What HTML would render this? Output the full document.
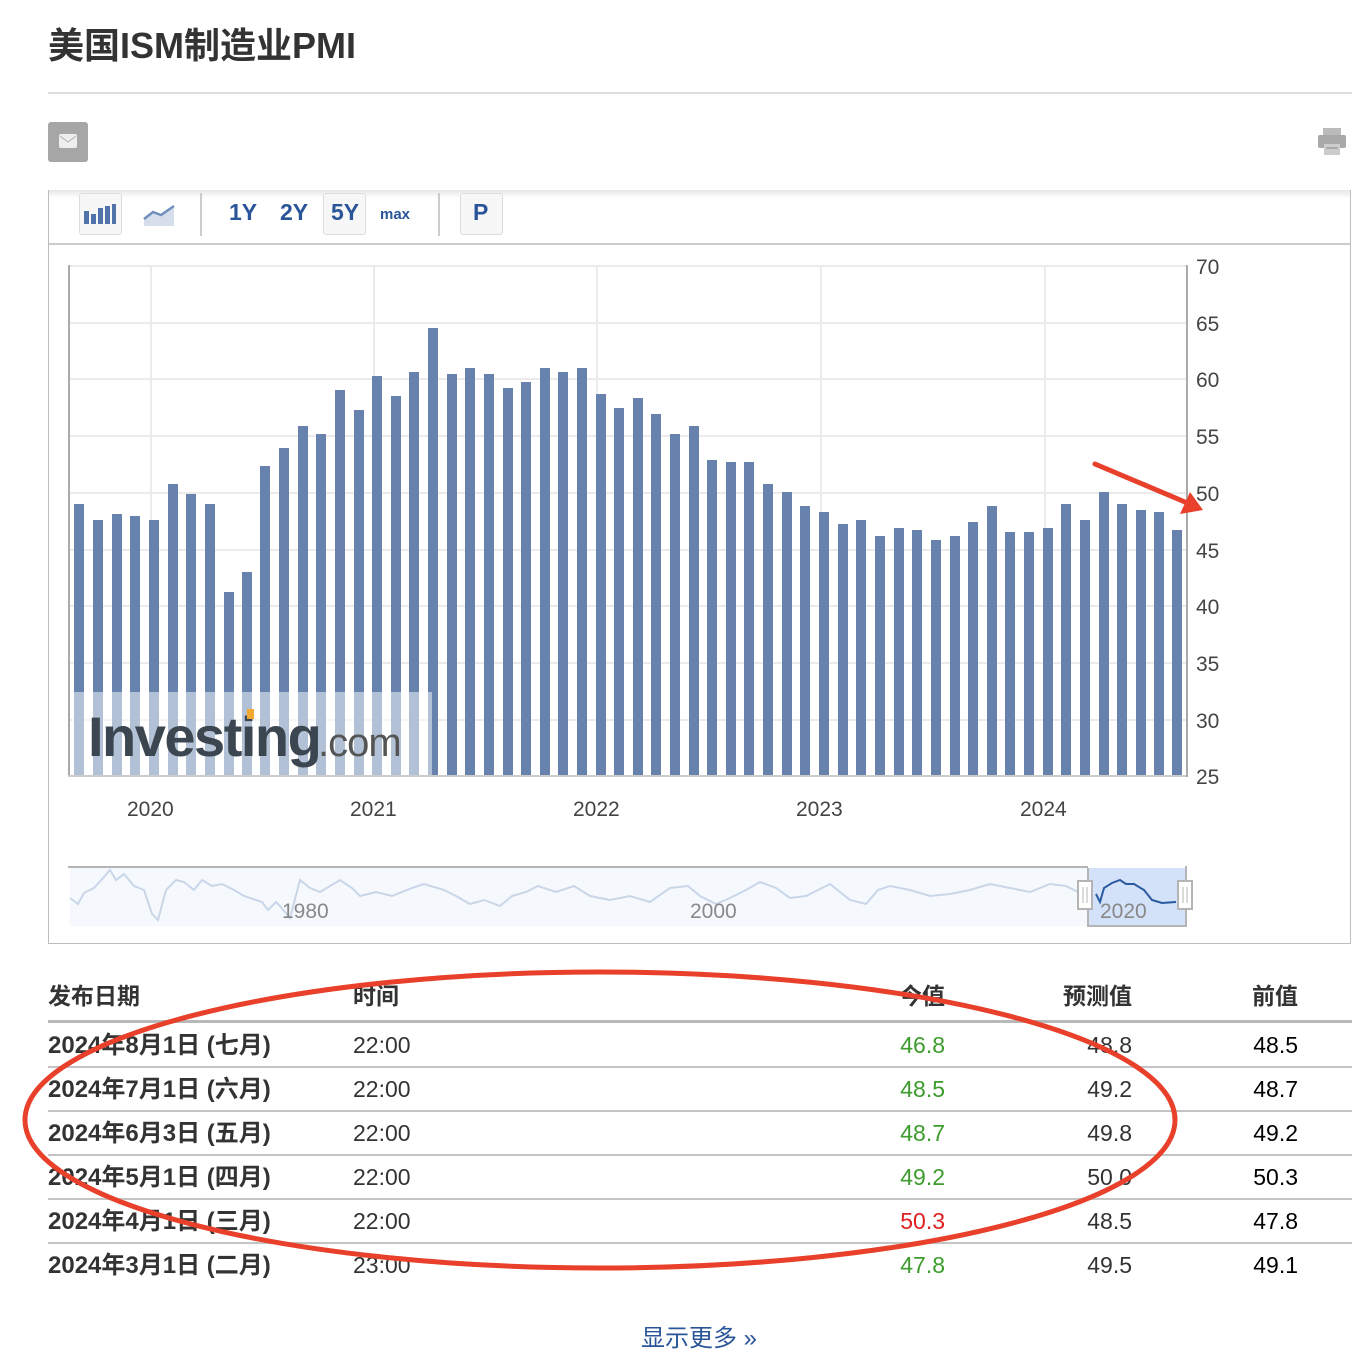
<!DOCTYPE html>
<html><head><meta charset="utf-8">
<style>
body{margin:0;width:1356px;height:1332px;overflow:hidden;background:#fff;font-family:"Liberation Sans","Noto Sans CJK SC",sans-serif;color:#333;position:relative}
.a{position:absolute;white-space:nowrap}
.h{font-size:23px;font-weight:bold;top:980px;line-height:32px}
.r{font-size:23px;line-height:30px}
.b{font-weight:bold;font-size:24px}
.g{color:#3c9c2c}.red{color:#e02020}
.rt{text-align:right;width:120px}
.tb{position:absolute;top:193px;height:42px;border:1px solid #ddd;border-radius:3px;background:#f7f7f7;box-sizing:border-box}
.tx{position:absolute;top:199px;font-size:23px;font-weight:bold;color:#2a5599}
</style></head><body>
<div class="a" style="left:48px;top:17px;font-size:36px;font-weight:bold;color:#333">美国ISM制造业PMI</div>
<div class="a" style="left:48px;top:92px;width:1304px;height:2px;background:#ddd"></div>
<div class="a" style="left:48px;top:122px;width:40px;height:40px;background:#a6a6a6;border-radius:3px"></div>
<div class="a" style="left:59px;top:134px;width:18px;height:14px;background:#eee;border-radius:2px"></div>
<svg class="a" style="left:59px;top:134px" width="18" height="14"><path d="M1 2 L9 8 L17 2" stroke="#bbb" fill="none" stroke-width="1.2"/></svg>
<svg class="a" style="left:1316px;top:126px" width="32" height="32"><rect x="7" y="2" width="18" height="8" fill="#bbb"/><rect x="2" y="9" width="28" height="13" rx="2" fill="#a9a9a9"/><rect x="8" y="18" width="16" height="11" fill="#ccc"/><rect x="10" y="21" width="12" height="2" fill="#aaa"/></svg>

<div class="a" style="left:48px;top:190px;width:1303px;height:754px;border:1px solid #bdbdbd;border-top:1px solid #ccc;box-sizing:border-box"></div>
<div class="a" style="left:49px;top:243px;width:1301px;height:2px;background:#ccc"></div>
<div class="a" style="left:49px;top:190px;width:1301px;height:8px;background:linear-gradient(#e6e6e6,#fff)"></div>
<div class="tb" style="left:79px;width:43px"></div>
<svg class="a" style="left:84px;top:203px" width="34" height="22"><rect x="0" y="8" width="5" height="13" fill="#4f73aa"/><rect x="7" y="11" width="5" height="10" fill="#4f73aa"/><rect x="14" y="5" width="5" height="16" fill="#4f73aa"/><rect x="21" y="3" width="5" height="18" fill="#4f73aa"/><rect x="28" y="1" width="4" height="20" fill="#4f73aa"/></svg>
<svg class="a" style="left:143px;top:201px" width="34" height="26"><path d="M1 18 L10 11 L18 14 L31 5 L31 25 L1 25Z" fill="#d5deea"/><path d="M1 18 L10 11 L18 14 L31 5" stroke="#6f8fbd" stroke-width="2.5" fill="none"/></svg>
<div class="a" style="left:200px;top:193px;width:2px;height:43px;background:#ccc"></div>
<div class="tx" style="left:229px">1Y</div>
<div class="tx" style="left:280px">2Y</div>
<div class="tb" style="left:323px;width:43px"></div>
<div class="tx" style="left:331px">5Y</div>
<div class="tx" style="left:380px;font-size:15px;top:206px">max</div>
<div class="a" style="left:438px;top:193px;width:2px;height:43px;background:#ccc"></div>
<div class="tb" style="left:460px;width:43px"></div>
<div class="tx" style="left:473px">P</div>

<svg class="a" style="left:0;top:0" width="1356" height="1332">
<g stroke="#ebebeb" stroke-width="2">
<line x1="69" y1="266" x2="1186" y2="266"/><line x1="69" y1="323" x2="1186" y2="323"/><line x1="69" y1="379" x2="1186" y2="379"/><line x1="69" y1="436" x2="1186" y2="436"/><line x1="69" y1="493" x2="1186" y2="493"/><line x1="69" y1="550" x2="1186" y2="550"/><line x1="69" y1="606" x2="1186" y2="606"/><line x1="69" y1="663" x2="1186" y2="663"/><line x1="69" y1="720" x2="1186" y2="720"/>
<line x1="151" y1="266" x2="151" y2="776"/><line x1="374" y1="266" x2="374" y2="776"/><line x1="597" y1="266" x2="597" y2="776"/><line x1="821" y1="266" x2="821" y2="776"/><line x1="1045" y1="266" x2="1045" y2="776"/>
</g>
<g fill="#6682ad">
<rect x="74" y="504" width="10" height="272"/><rect x="93" y="520" width="10" height="256"/><rect x="112" y="514" width="10" height="262"/><rect x="130" y="516" width="10" height="260"/><rect x="149" y="520" width="10" height="256"/><rect x="168" y="484" width="10" height="292"/><rect x="186" y="494" width="10" height="282"/><rect x="205" y="504" width="10" height="272"/><rect x="224" y="592" width="10" height="184"/><rect x="242" y="572" width="10" height="204"/><rect x="260" y="466" width="10" height="310"/><rect x="279" y="448" width="10" height="328"/><rect x="298" y="426" width="10" height="350"/><rect x="316" y="434" width="10" height="342"/><rect x="335" y="390" width="10" height="386"/><rect x="354" y="410" width="10" height="366"/><rect x="372" y="376" width="10" height="400"/><rect x="391" y="396" width="10" height="380"/><rect x="409" y="372" width="10" height="404"/><rect x="428" y="328" width="10" height="448"/><rect x="447" y="374" width="10" height="402"/><rect x="465" y="368" width="10" height="408"/><rect x="484" y="374" width="10" height="402"/><rect x="503" y="388" width="10" height="388"/><rect x="521" y="382" width="10" height="394"/><rect x="540" y="368" width="10" height="408"/><rect x="558" y="372" width="10" height="404"/><rect x="577" y="368" width="10" height="408"/><rect x="596" y="394" width="10" height="382"/><rect x="614" y="408" width="10" height="368"/><rect x="633" y="398" width="10" height="378"/><rect x="651" y="414" width="10" height="362"/><rect x="670" y="434" width="10" height="342"/><rect x="689" y="426" width="10" height="350"/><rect x="707" y="460" width="10" height="316"/><rect x="726" y="462" width="10" height="314"/><rect x="744" y="462" width="10" height="314"/><rect x="763" y="484" width="10" height="292"/><rect x="782" y="492" width="10" height="284"/><rect x="800" y="506" width="10" height="270"/><rect x="819" y="512" width="10" height="264"/><rect x="838" y="524" width="10" height="252"/><rect x="856" y="520" width="10" height="256"/><rect x="875" y="536" width="10" height="240"/><rect x="894" y="528" width="10" height="248"/><rect x="912" y="530" width="10" height="246"/><rect x="931" y="540" width="10" height="236"/><rect x="950" y="536" width="10" height="240"/><rect x="968" y="522" width="10" height="254"/><rect x="987" y="506" width="10" height="270"/><rect x="1005" y="532" width="10" height="244"/><rect x="1024" y="532" width="10" height="244"/><rect x="1043" y="528" width="10" height="248"/><rect x="1061" y="504" width="10" height="272"/><rect x="1080" y="520" width="10" height="256"/><rect x="1099" y="492" width="10" height="284"/><rect x="1117" y="504" width="10" height="272"/><rect x="1136" y="510" width="10" height="266"/><rect x="1154" y="512" width="10" height="264"/><rect x="1172" y="530" width="10" height="246"/>
</g>
<rect x="72" y="692" width="360" height="84" fill="#fff" fill-opacity="0.5"/>
<text x="88" y="756" font-family="Liberation Sans" font-weight="bold" font-size="56" fill="#3c4650" letter-spacing="-1.5">Investing</text>
<text x="318" y="756" font-family="Liberation Sans" font-size="40" fill="#555" letter-spacing="-1">.com</text>
<rect x="247" y="709" width="7" height="10" fill="#f0a830"/>
<line x1="69" y1="265" x2="69" y2="777" stroke="#aaa" stroke-width="2"/>
<line x1="68" y1="776" x2="1187" y2="776" stroke="#ccc" stroke-width="2"/>
<line x1="1187" y1="265" x2="1187" y2="777" stroke="#aaa" stroke-width="2"/>
<g font-family="Liberation Sans" font-size="21" fill="#444">
<text x="1196" y="274">70</text><text x="1196" y="331">65</text><text x="1196" y="387">60</text><text x="1196" y="444">55</text><text x="1196" y="501">50</text><text x="1196" y="558">45</text><text x="1196" y="614">40</text><text x="1196" y="671">35</text><text x="1196" y="728">30</text><text x="1196" y="784">25</text>
<text x="127" y="816">2020</text><text x="350" y="816">2021</text><text x="573" y="816">2022</text><text x="796" y="816">2023</text><text x="1020" y="816">2024</text>
</g>
<rect x="70" y="868" width="1116" height="58" fill="#f5f9fe"/>
<path d="M70 898 L78 904 L84 893 L94 888 L104 877 L110 870 L116 880 L124 874 L134 886 L144 890 L152 914 L158 920 L166 890 L176 880 L184 882 L194 890 L202 880 L212 886 L222 884 L234 890 L244 896 L262 902 L268 910 L276 902 L280 906 L290 918 L300 880 L310 888 L320 892 L340 880 L352 888 L360 896 L376 892 L392 896 L412 888 L424 884 L444 890 L456 896 L470 904 L484 900 L500 906 L512 896 L526 892 L538 886 L556 892 L574 886 L590 896 L610 900 L630 896 L650 902 L670 888 L688 886 L700 896 L716 904 L730 898 L746 890 L760 882 L776 888 L790 898 L806 896 L830 884 L850 900 L866 904 L878 890 L890 886 L910 890 L930 896 L950 894 L970 890 L990 884 L1010 888 L1030 892 L1050 884 L1066 886 L1078 892" stroke="#c9d6e8" stroke-width="2" fill="none"/>
<path d="M1088 868 L1088 926 L1186 926 L1186 868" fill="#d3e2f8"/>
<path d="M1088 868 L1088 926 L1186 926 L1186 866" fill="none" stroke="#b4b4b4" stroke-width="2"/>
<path d="M1096 894 L1100 902 L1104 888 L1112 883 L1120 880 L1126 884 L1134 884 L1144 890 L1152 900 L1162 903 L1176 902" stroke="#2a5aa0" stroke-width="2" fill="none"/>
<line x1="68" y1="867" x2="1088" y2="867" stroke="#b4b4b4" stroke-width="2"/>
<rect x="1078" y="881" width="14" height="28" fill="#fff" stroke="#b4b4b4" stroke-width="2"/>
<rect x="1178" y="881" width="14" height="28" fill="#fff" stroke="#b4b4b4" stroke-width="2"/>
<path d="M1083 887v16M1087 887v16M1183 887v16M1187 887v16" stroke="#b4b4b4"/>
<g font-family="Liberation Sans" font-size="21" fill="#888"><text x="282" y="918">1980</text><text x="690" y="918">2000</text><text x="1100" y="918">2020</text></g>
</svg>

<div class="a h" style="left:48px">发布日期</div>
<div class="a h" style="left:353px">时间</div>
<div class="a h rt" style="left:825px">今值</div>
<div class="a h rt" style="left:1012px">预测值</div>
<div class="a h rt" style="left:1178px">前值</div>
<div class="a" style="left:48px;top:1020px;width:1304px;height:3px;background:#b8b8b8"></div>
<div class="a" style="left:48px;top:1066px;width:1304px;height:2px;background:#c4c4c4"></div>
<div class="a" style="left:48px;top:1110px;width:1304px;height:2px;background:#c4c4c4"></div>
<div class="a" style="left:48px;top:1154px;width:1304px;height:2px;background:#c4c4c4"></div>
<div class="a" style="left:48px;top:1198px;width:1304px;height:2px;background:#c4c4c4"></div>
<div class="a" style="left:48px;top:1242px;width:1304px;height:2px;background:#c4c4c4"></div>

<div class="a r b" style="left:48px;top:1031px">2024年8月1日 (七月)</div><div class="a r" style="left:353px;top:1030px">22:00</div><div class="a r rt g" style="left:825px;top:1030px">46.8</div><div class="a r rt" style="left:1012px;top:1030px">48.8</div><div class="a r rt" style="left:1178px;top:1030px;color:#000">48.5</div>
<div class="a r b" style="left:48px;top:1075px">2024年7月1日 (六月)</div><div class="a r" style="left:353px;top:1074px">22:00</div><div class="a r rt g" style="left:825px;top:1074px">48.5</div><div class="a r rt" style="left:1012px;top:1074px">49.2</div><div class="a r rt" style="left:1178px;top:1074px;color:#000">48.7</div>
<div class="a r b" style="left:48px;top:1119px">2024年6月3日 (五月)</div><div class="a r" style="left:353px;top:1118px">22:00</div><div class="a r rt g" style="left:825px;top:1118px">48.7</div><div class="a r rt" style="left:1012px;top:1118px">49.8</div><div class="a r rt" style="left:1178px;top:1118px;color:#000">49.2</div>
<div class="a r b" style="left:48px;top:1163px">2024年5月1日 (四月)</div><div class="a r" style="left:353px;top:1162px">22:00</div><div class="a r rt g" style="left:825px;top:1162px">49.2</div><div class="a r rt" style="left:1012px;top:1162px">50.0</div><div class="a r rt" style="left:1178px;top:1162px;color:#000">50.3</div>
<div class="a r b" style="left:48px;top:1207px">2024年4月1日 (三月)</div><div class="a r" style="left:353px;top:1206px">22:00</div><div class="a r rt red" style="left:825px;top:1206px">50.3</div><div class="a r rt" style="left:1012px;top:1206px">48.5</div><div class="a r rt" style="left:1178px;top:1206px;color:#000">47.8</div>
<div class="a r b" style="left:48px;top:1251px">2024年3月1日 (二月)</div><div class="a r" style="left:353px;top:1250px">23:00</div><div class="a r rt g" style="left:825px;top:1250px">47.8</div><div class="a r rt" style="left:1012px;top:1250px">49.5</div><div class="a r rt" style="left:1178px;top:1250px;color:#000">49.1</div>
<div class="a" style="left:641px;top:1318px;font-size:24px;color:#2a5599">显示更多 »</div>

<svg class="a" style="left:0;top:0;pointer-events:none" width="1356" height="1332">
<ellipse cx="600" cy="1120" rx="575" ry="148" fill="none" stroke="#e8402a" stroke-width="5"/>
<path d="M1095 464 L1185 502" stroke="#e8402a" stroke-width="5" stroke-linecap="round"/>
<path d="M1203 510 L1180 514 L1190 492 Z" fill="#e8402a"/>
</svg>
</body></html>
